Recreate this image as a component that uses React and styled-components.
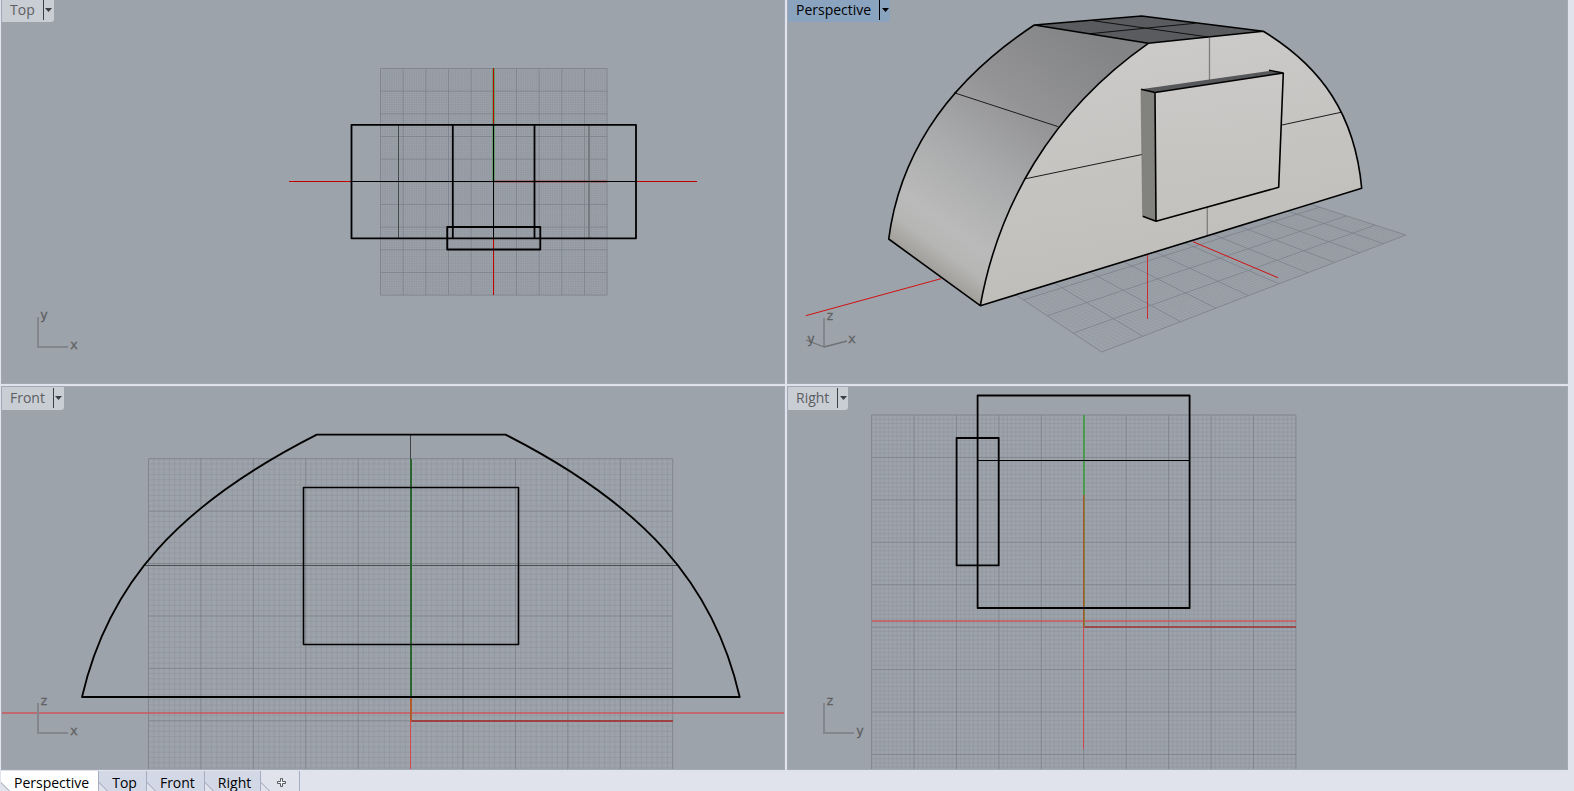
import React from "react";
import styled, { createGlobalStyle, css } from "styled-components";

const frame = "#e0e3ec";
const edge = "#a3a8b5";
const canvas = "#9da3aa";

const GlobalStyle = createGlobalStyle`
  * { box-sizing: border-box; }
  body {
    margin: 0;
    background: ${frame};
    font-family: "Open Sans", "Noto Sans", sans-serif;
    font-size: 14px;
  }
`;

const Shell = styled.div`
  display: flex;
  flex-direction: column;
  height: 100vh;
  overflow: hidden;
  background: ${frame};
`;

const ViewGrid = styled.main`
  flex: 1;
  min-height: 0;
  display: grid;
  grid-template-columns: minmax(0, 784fr) minmax(0, 781fr);
  grid-template-rows: minmax(0, 1fr) minmax(0, 1fr);
  gap: 2px;
  padding: 0 6px 0 1px;
`;

const Viewport = styled.section`
  position: relative;
  min-width: 0;
  min-height: 0;
  overflow: hidden;
  background: ${canvas};
  border: 1px solid ${edge};
  ${(p) => p.$flush && css`border-top: 0;`}
`;

const Drawing = styled.svg`
  display: block;
  width: 100%;
  height: 100%;
`;

const Title = styled.div`
  position: absolute;
  top: 0;
  left: 0;
  display: flex;
  align-items: flex-start;
  height: ${(p) => (p.$flush ? 22 : 23)}px;
  padding-top: ${(p) => (p.$flush ? 0 : 1)}px;
  background: ${(p) => (p.$active ? "#8aa4c0" : "#c9cdd4")};
  color: ${(p) => (p.$active ? "#000" : "#5c5e60")};
  border-bottom-right-radius: 3px;
`;

const TitleName = styled.button`
  border: 0;
  background: none;
  color: inherit;
  font: inherit;
  line-height: 20px;
  height: 20px;
  padding: 0 8px;
`;

const TitleMenu = styled.button`
  display: flex;
  align-items: center;
  justify-content: center;
  width: 11px;
  height: 20px;
  padding: 0;
  border: 0;
  border-left: 1px solid currentColor;
  background: none;
  color: ${(p) => (p.$active ? "#000" : "#3c3e40")};
`;

const TabBar = styled.nav`
  flex: none;
  display: flex;
  height: 21px;
  padding: 1px 0 0 1px;
  overflow: hidden;
`;

const Tab = styled.button`
  flex: none;
  display: flex;
  align-items: flex-start;
  height: 20px;
  padding: 0 9px 0 13px;
  border: 0;
  border-right: 1px solid #a6aec2;
  color: #000;
  font: inherit;
  line-height: 24px;
  background: linear-gradient(
    45deg,
    ${frame} 5px,
    #a6aec2 6px,
    ${(p) => (p.$active ? "#fff" : p.$plain ? frame : "#d3d8e7")} 7px
  );
`;

const AddMark = styled.svg`
  display: block;
  margin: 7px 4px 0 3px;
`;

/* ---- drawing helpers ---- */

const Stroke = ({ d, w = 1, c = "#000", o = 1, ...rest }) => (
  <path d={d} fill="none" stroke={c} strokeWidth={w} opacity={o} {...rest} />
);

function linesFor(project, n, every) {
  const minor = [];
  const major = [];
  for (let i = 0; i <= n; i++) {
    const t = (i * 10) / n;
    const seg = (a, b) => `M${project(...a).join(" ")}L${project(...b).join(" ")}`;
    const out = i % every === 0 ? major : minor;
    out.push(seg([t, 0], [t, 10]), seg([0, t], [10, t]));
  }
  return [minor.join(""), major.join("")];
}

function PlaneGrid({ project, minorOpacity = 0.22, majorWidth = 1 }) {
  const [minor, major] = linesFor(project, 100, 10);
  return (
    <g>
      <Stroke d={minor} c="#7b808b" o={minorOpacity} />
      <Stroke d={major} c="#7b7e88" o={0.8} w={majorWidth} />
    </g>
  );
}

const flat = (x, y, step) => (u, v) => [
  +(x + u * step).toFixed(2),
  +(y + v * step).toFixed(2),
];

const tilted = (u, v) => {
  const w = 1 + 0.0399 * u + 0.0475 * v;
  return [
    +((1101.7 + 86.5 * u + 473 * 0.0475 * v) / w).toFixed(2),
    +((352 - 2.32 * u - 66 * 0.0475 * v) / w).toFixed(2),
  ];
};

const AxisText = ({ x, y, children }) => (
  <text
    x={x}
    y={y}
    fill="#5f6163"
    fontFamily='"DejaVu Sans Mono", monospace'
    fontSize="13"
    stroke="#5f6163"
    strokeWidth="0.3"
  >
    {children}
  </text>
);

const AxisCorner = ({ x, y, up, across }) => (
  <g>
    <Stroke d={`M${x} ${y - 30}V${y}H${x + 30}`} w={2} c="#83868c" />
    <AxisText x={x + 2} y={y - 28}>{up}</AxisText>
    <AxisText x={x + 32} y={y + 2}>{across}</AxisText>
  </g>
);

const Top = () => (
  <g>
    <PlaneGrid project={flat(380.5, 68.5, 22.66)} minorOpacity={0.18} />
    <Stroke d="M493.5 68V181" w={3} c="#4a9a4e" o={0.6} />
    <Stroke d="M493.5 181.5H607" w={3} c="#9a4a4c" o={0.5} />
    <Stroke d="M493.5 68V295M289 181.5H697" c="#c00000" />
    <Stroke d="M398.5 125V238" c="#3f4a4a" />
    <Stroke d="M589 125V238" w={2} c="#777a80" />
    <Stroke d="M351 181.5H636M493.5 125V238" />
    <Stroke
      d="M351.5 124.8H636V238.3H351.5ZM452.8 125V238M534.5 125V238M447.2 227H540.3V249.5H447.2Z"
      w={1.8}
      strokeLinejoin="round"
    />
    <AxisCorner x={38} y={347} up="y" across="x" />
  </g>
);

const Perspective = () => (
  <g>
    <defs>
      <linearGradient id="roof" gradientUnits="userSpaceOnUse" x1="1102" y1="41" x2="934" y2="272">
        <stop offset="0" stopColor="#838485" />
        <stop offset="0.35" stopColor="#949496" />
        <stop offset="0.6" stopColor="#a9aaab" />
        <stop offset="0.84" stopColor="#bababa" />
        <stop offset="0.92" stopColor="#b6b6b5" />
        <stop offset="1" stopColor="#a19f9a" />
      </linearGradient>
      <linearGradient id="facade" gradientUnits="userSpaceOnUse" x1="1180" y1="35" x2="1220" y2="270">
        <stop offset="0" stopColor="#cccac8" />
        <stop offset="1" stopColor="#bfbebb" />
      </linearGradient>
      <linearGradient id="door" gradientUnits="userSpaceOnUse" x1="1210" y1="75" x2="1220" y2="215">
        <stop offset="0" stopColor="#cbc9c7" />
        <stop offset="1" stopColor="#c3c2bf" />
      </linearGradient>
    </defs>
    <PlaneGrid project={tilted} minorOpacity={0.16} />
    <Stroke d="M805.7 315.7L941 278.7M1193 241.7L1278 277.7" c="#d01212" />
    <Stroke d="M1147.5 254V319" c="#cc2a2e" />
    <path
      d="M888.7 239C900 153 948 82 1034.3 25L1148.3 43.3C1050 112 998 207 980.3 305.7Z"
      fill="url(#roof)"
    />
    <path
      d="M980.3 305.7C998 207 1050 112 1148.3 43.3L1263.3 31.3C1322 67 1355 115 1361.7 188.3Z"
      fill="url(#facade)"
    />
    <path d="M1034.3 25L1141.7 16L1263.3 31.3L1148.3 43.3Z" fill="#5a5b5e" />
    <Stroke d="M1093 20.7L1208.3 37M1090 33.7L1195 23.3" c="#111" />
    <Stroke d="M954 92.7L1058.3 126.7M1024.3 179L1142 154.5M1282 125L1341 112.3" c="#1c1c1c" />
    <Stroke d="M1209.5 38V80M1207.3 207V236" w={1.3} c="#7d7d7c" />
    <Stroke
      d="M888.7 239C900 153 948 82 1034.3 25L1141.7 16L1263.3 31.3C1322 67 1355 115 1361.7 188.3L980.3 305.7ZM1034.3 25L1148.3 43.3L1263.3 31.3M1148.3 43.3C1050 112 998 207 980.3 305.7"
      w={1.6}
      strokeLinejoin="round"
    />
    <path d="M1141 89.3L1155 92.5L1156 221.3L1142.7 216.3Z" fill="#82827f" />
    <path d="M1141 89.3L1269 71L1283.3 73L1155 92.5Z" fill="#56585b" />
    <path d="M1155 92.5L1283.3 73L1278.7 187.3L1156 221.3Z" fill="url(#door)" />
    <Stroke
      d="M1141 89.3L1155 92.5L1283.3 73L1278.7 187.3L1156 221.3L1142.7 216.3M1155 92.5L1156 221.3M1269 70.3L1283.3 73"
      w={1.6}
      strokeLinejoin="round"
    />
    <Stroke d="M1141 89.3L1142.7 216.3" c="#6f6f6d" o={0.6} />
    <Stroke d="M824 318V347" w={2} c="#83868c" />
    <Stroke d="M824 347L847 341M824 347L806 340" w={1.3} c="#6f7276" />
    <AxisText x={826} y={320}>z</AxisText>
    <AxisText x={848} y={343}>x</AxisText>
    <AxisText x={807} y={343}>y</AxisText>
  </g>
);

const Front = () => (
  <g>
    <PlaneGrid project={flat(148.5, 458.7, 52.42)} />
    <Stroke d="M2 713H784" w={2} c="#d04c50" o={0.65} />
    <Stroke d="M411 721H673" w={2} c="#9c4243" />
    <Stroke d="M143 565.5H677" w={1} c="#4a4e50" />
    <Stroke d="M410.5 434V459" c="#3e4144" w={1} />
    <Stroke d="M411 459V697" c="#2c6430" w={2} />
    <Stroke d="M411 697V721" c="#b35a2a" w={2} />
    <Stroke d="M410.5 721V769" c="#d8484c" />
    <Stroke
      d="M82 697C108 584 178 505 316.8 434.6H505.5C644 505 714 584 739.7 697Z"
      w={1.8}
      strokeLinejoin="round"
    />
    <Stroke d="M82 697H739.7" w={2} />
    <Stroke d="M303.5 487.5H518.5V644.5H303.5Z" w={1.6} strokeLinejoin="round" />
    <AxisCorner x={38} y={733} up="z" across="x" />
  </g>
);

const Right = () => (
  <g>
    <PlaneGrid project={flat(871.6, 415, 42.43)} />
    <Stroke d="M872 621H1296" w={2} c="#d04c50" o={0.65} />
    <Stroke d="M1084 627H1296" w={2} c="#9c4a4b" />
    <Stroke d="M1084 415V495" w={2} c="#4b9a50" />
    <Stroke d="M1084 495V627" w={2} c="#7f7d45" />
    <Stroke d="M1083.5 495V627" c="#a8562a" />
    <Stroke d="M1083.5 627V749" c="#cc4a50" />
    <Stroke
      d="M977.6 395.5H1189.6V608H977.6ZM956.6 438H998.7V565.4H956.6Z"
      w={1.8}
      strokeLinejoin="round"
    />
    <Stroke d="M977.6 460.5H1189.6" />
    <AxisCorner x={824} y={733} up="z" across="y" />
  </g>
);

const views = [
  { name: "Top", box: "2 0 782 383", flush: true, Scene: Top },
  { name: "Perspective", box: "788 0 779 383", flush: true, active: true, Scene: Perspective },
  { name: "Front", box: "2 387 782 382", Scene: Front },
  { name: "Right", box: "788 387 779 382", Scene: Right },
];

const tabs = ["Perspective", "Top", "Front", "Right"];

export default function App() {
  return (
    <Shell>
      <GlobalStyle />
      <ViewGrid>
        {views.map(({ name, box, flush, active, Scene }) => (
          <Viewport key={name} $flush={flush} aria-label={name}>
            <Drawing viewBox={box} aria-hidden="true">
              <Scene />
            </Drawing>
            <Title $flush={flush} $active={active}>
              <TitleName type="button">{name}</TitleName>
              <TitleMenu type="button" $active={active} aria-label={`${name} view menu`}>
                <svg width="7" height="4" viewBox="0 0 7 4" aria-hidden="true">
                  <path d="M0 0H7L3.5 4Z" fill="currentColor" />
                </svg>
              </TitleMenu>
            </Title>
          </Viewport>
        ))}
      </ViewGrid>
      <TabBar aria-label="Viewport tabs">
        {tabs.map((name) => (
          <Tab key={name} type="button" $active={name === "Perspective"}>
            {name}
          </Tab>
        ))}
        <Tab type="button" $plain aria-label="Add viewport tab">
          <AddMark width="9" height="9" viewBox="0 0 9 9">
            <path
              d="M3.5 0.5H5.5V3.5H8.5V5.5H5.5V8.5H3.5V5.5H0.5V3.5H3.5Z"
              fill="#f4f5f8"
              stroke="#5a5c60"
            />
          </AddMark>
        </Tab>
      </TabBar>
    </Shell>
  );
}
